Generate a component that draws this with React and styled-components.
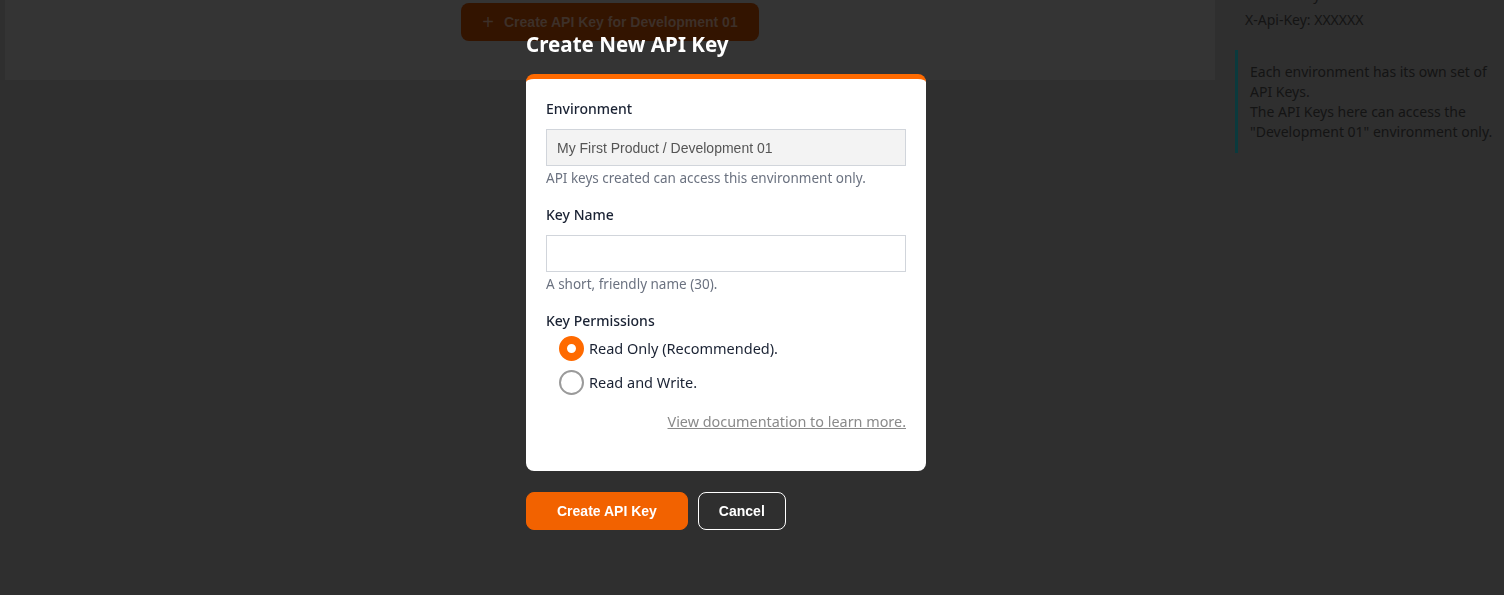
import React, {useState} from 'react';
import styled, {createGlobalStyle} from 'styled-components';

const Global = createGlobalStyle`
  html, body {
    margin: 0;
    background: #2f2f2f;
    font-family: "Noto Sans", "Open Sans", sans-serif;
    overflow: hidden;
  }
`

const Page = styled.div`
  display: flex;
  gap: 20px;
  padding-left: 5px;
  height: 595px;
`
const MainCol = styled.div`
  width: 1210px;
`
const TopCard = styled.div`
  height: 80px;
  background: #343434;
  display: flex;
  justify-content: center;
  padding-top: 3px;
  box-sizing: border-box;
`
const DimButton = styled.div`
  height: 38px;
  padding: 0 21px;
  border-radius: 8px;
  background: #331400;
  color: #3d3029;
  font: bold 14px "Liberation Sans", Arial, sans-serif;
  display: flex;
  align-items: center;
  gap: 10px;
  span { font-weight: normal; font-size: 20px; line-height: 1; }
`
const Side = styled.aside`
  flex: 1;
  color: #141414;
  font-size: 14px;
  p {
    margin: 5px 0 0 10px;
    line-height: 20px;
  }
  p.cut { margin-top: -15px; }
`
const InfoBox = styled.div`
  margin-top: 20px;
  border-left: 3px solid #0b3a3d;
  padding: 12px 0 11px 12px;
  line-height: 20px;
  font-size: 14px;
`

const Overlay = styled.div`
  position: fixed;
  inset: 0;
`
const Modal = styled.div`
  position: absolute;
  left: 526px;
  top: 30px;
  width: 400px;
`
const Title = styled.h2`
  margin: 0 0 16px;
  color: #fff;
  font-size: 20.6px;
  font-weight: 700;
  line-height: 28px;
`
const Card = styled.div`
  background: #fff;
  border-top: 5px solid #ff6a00;
  border-radius: 8px;
  padding: 20px 20px 19px;
  color: #1a2233;
`
const Field = styled.div`
  margin-bottom: 19px;
`
const Label = styled.div`
  font-size: 14px;
  font-weight: 500;
  line-height: 20px;
  margin-bottom: ${p => p.tight ? '0' : '10px'};
`
const Input = styled.input`
  display: block;
  box-sizing: border-box;
  width: 100%;
  height: 37px;
  border: 1px solid #d1d5db;
  background: ${p => p.disabled ? '#f3f3f3' : '#fff'};
  padding: 0 10px;
  font: 14px "Liberation Sans", Arial, sans-serif;
  color: #555;
  outline: none;
`
const Help = styled.div`
  margin-top: 4px;
  font-size: 13.5px;
  line-height: 16px;
  color: #6b7280;
`
const Radios = styled.div`
  padding-left: 13px;
  margin-top: 4px;
  display: flex;
  flex-direction: column;
  gap: 8px;
`
const RadioRow = styled.label`
  display: flex;
  align-items: center;
  gap: 5px;
  height: 26px;
  font-size: 14.5px;
  cursor: pointer;
`
const Circle = styled.span`
  box-sizing: border-box;
  width: 25px;
  height: 25px;
  border-radius: 50%;
  border: ${p => p.on ? '8px solid #ff6a00' : '2px solid #9a9a9a'};
  background: #fff;
`
const DocLink = styled.a`
  display: block;
  text-align: right;
  margin: 17px 0 20px;
  color: #8a8a8a;
  font-size: 14.4px;
  line-height: 20px;
  text-decoration: underline;
`
const Actions = styled.div`
  display: flex;
  gap: 10px;
  margin-top: 21px;
`
const Btn = styled.button`
  height: 38px;
  padding: 0 ${p => p.primary ? '30px' : '20px'};
  border-radius: 8px;
  border: 1px solid ${p => p.primary ? '#f26200' : '#fff'};
  background: ${p => p.primary ? '#f26200' : 'transparent'};
  color: #fff;
  font: bold 14px "Liberation Sans", Arial, sans-serif;
  cursor: pointer;
`

const App = () => {
  const [perm, setPerm] = useState('read');
  return (
    <>
      <Global/>
      <Page>
        <MainCol>
          <TopCard>
            <DimButton><span>+</span>Create API Key for Development 01</DimButton>
          </TopCard>
        </MainCol>
        <Side>
          <p className="cut">Header Key</p>
          <p>X-Api-Key: XXXXXX</p>
          <InfoBox>
            Each environment has its own set of<br/>
            API Keys.<br/>
            The API Keys here can access the<br/>
            "Development 01" environment only.
          </InfoBox>
        </Side>
      </Page>
      <Overlay>
        <Modal>
          <Title>Create New API Key</Title>
          <Card>
            <Field>
              <Label>Environment</Label>
              <Input disabled value="My First Product / Development 01" readOnly/>
              <Help>API keys created can access this environment only.</Help>
            </Field>
            <Field>
              <Label>Key Name</Label>
              <Input/>
              <Help>A short, friendly name (30).</Help>
            </Field>
            <Label tight={1}>Key Permissions</Label>
            <Radios>
              <RadioRow onClick={() => setPerm('read')}>
                <Circle on={perm === 'read' ? 1 : 0}/>Read Only (Recommended).
              </RadioRow>
              <RadioRow onClick={() => setPerm('write')}>
                <Circle on={perm === 'write' ? 1 : 0}/>Read and Write.
              </RadioRow>
            </Radios>
            <DocLink href="#">View documentation to learn more.</DocLink>
          </Card>
          <Actions>
            <Btn primary={1}>Create API Key</Btn>
            <Btn>Cancel</Btn>
          </Actions>
        </Modal>
      </Overlay>
    </>
  )
}

export default App;
